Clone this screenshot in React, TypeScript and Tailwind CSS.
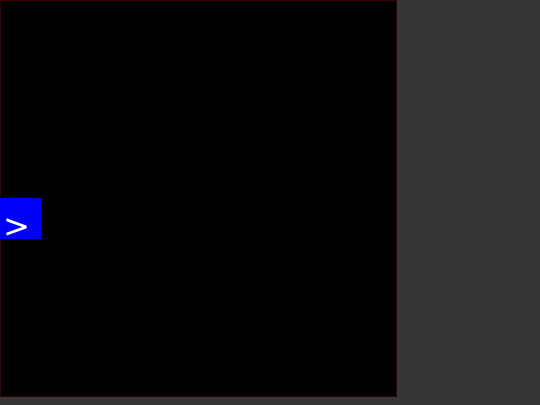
export default function App() {
  return (
    <div className="h-[405px] w-[540px] bg-[#363636]">
      <div className="flex h-[397px] w-[397px] items-start border border-dotted border-[#4a1414] bg-black">
        <button className="mt-[197px] -ml-px flex h-[41px] w-[41px] items-center justify-center bg-[#0000ff] pt-[14px] pr-[8px] text-[32px] leading-none text-white font-['DejaVu_Sans',sans-serif]">
          &gt;
        </button>
      </div>
    </div>
  )
}
